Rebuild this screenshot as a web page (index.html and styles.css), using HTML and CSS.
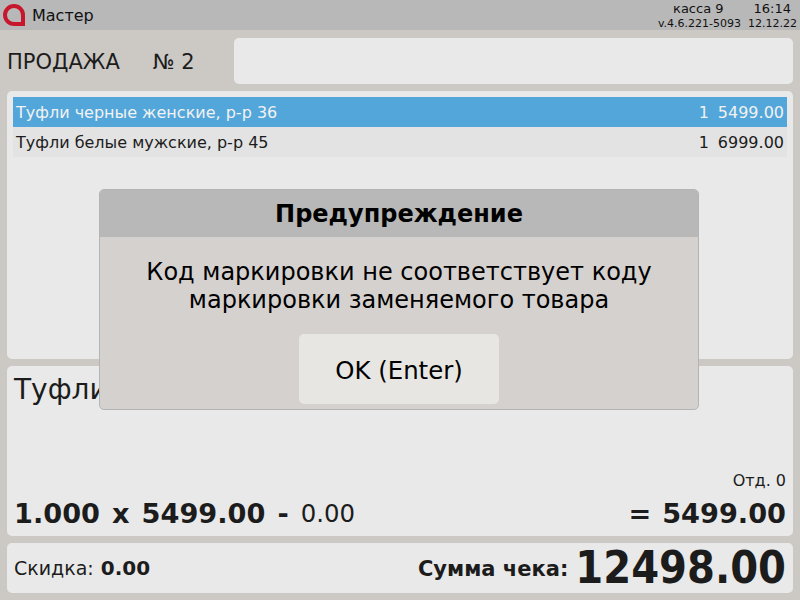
FILE: index.html
```html
<!DOCTYPE html>
<html lang="ru">
<head>
    <meta charset="UTF-8">
    <meta name="viewport" content="width=device-width, initial-scale=1.0">
    <title>Мастер</title>
    <link rel="stylesheet" href="styles.css">
</head>
<body>
    <div class="screen">
        <header class="topbar">
            <svg class="logo" width="22" height="22" viewBox="0 0 22 22">
                <path d="M11 2a9 9 0 1 0 0 18h9v-9a9 9 0 0 0-9-9z" fill="none" stroke="#c8162c" stroke-width="4"/>
            </svg>
            <span class="app-name">Мастер</span>
            <div class="status">
                <div class="status-row status-main"><span>касса 9</span><span class="status-time">16:14</span></div>
                <div class="status-row status-small"><span>v.4.6.221-5093</span><span class="status-date">12.12.22</span></div>
            </div>
        </header>

        <main class="content">
            <div class="sale-row">
                <div class="sale-title"><span>ПРОДАЖА</span><span>№ 2</span></div>
                <div class="sale-box"></div>
            </div>

            <section class="panel list-panel">
                <div class="line selected"><span class="line-name">Туфли черные женские, р-р 36</span><span>1</span><span class="line-price">5499.00</span></div>
                <div class="line"><span class="line-name">Туфли белые мужские, р-р 45</span><span>1</span><span class="line-price">6999.00</span></div>
            </section>

            <section class="panel info-panel">
                <div class="info-name">Туфли черные женские, р-р 36</div>
                <div class="info-dept">Отд. 0</div>
                <div class="calc">
                    <b>1.000</b><b>x</b><b>5499.00</b><b>-</b><span>0.00</span>
                    <b class="calc-eq">=</b><b>5499.00</b>
                </div>
            </section>

            <section class="panel total-panel">
                <span class="discount">Скидка: <b>0.00</b></span>
                <b class="total-label">Сумма чека:</b>
                <b class="total-value">12498.00</b>
            </section>
        </main>

        <div class="dialog">
            <div class="dialog-head">Предупреждение</div>
            <div class="dialog-body">
                <p class="dialog-text">Код маркировки не соответствует коду<br>маркировки заменяемого товара</p>
                <button class="dialog-btn" type="button">OK (Enter)</button>
            </div>
        </div>
    </div>
</body>
</html>
```

FILE: styles.css
```css
* {
    margin: 0;
    padding: 0;
    box-sizing: border-box;
}
body {
    font-family: "DejaVu Sans", sans-serif;
    color: #1c1c1c;
    background: #ccc8c4;
}
.screen {
    position: relative;
    width: 800px;
    height: 600px;
    overflow: hidden;
}
.topbar {
    height: 30px;
    display: flex;
    align-items: center;
    padding: 0 3px;
    background: #b8b8b8;
}
.logo {
    flex: none;
}
.app-name {
    margin-left: 7px;
    font-size: 16px;
    color: #111;
}
.status {
    align-self: flex-start;
    margin-left: auto;
    padding-top: 1px;
    color: #111;
}
.status-row {
    display: flex;
    justify-content: flex-end;
    white-space: nowrap;
}
.status-main {
    font-size: 13px;
    line-height: 16px;
}
.status-small {
    margin-top: 1px;
    font-size: 11px;
    line-height: 12px;
}
.status-time {
    margin-left: 30px;
    margin-right: 6px;
}
.status-date {
    margin-left: 7px;
}
.content {
    display: flex;
    flex-direction: column;
    gap: 7px;
    padding: 8px 7px 0;
}
.sale-row {
    display: flex;
    height: 46px;
}
.sale-title {
    width: 227px;
    display: flex;
    align-items: center;
    gap: 33px;
    padding-top: 2px;
    font-size: 21px;
}
.sale-box {
    flex: 1;
    background: #e9e9e9;
    border-radius: 5px;
}
.panel {
    background: #e9e9e9;
    border-radius: 5px;
}
.list-panel {
    height: 268px;
    padding: 6px;
}
.line {
    height: 30px;
    display: flex;
    align-items: center;
    gap: 9px;
    padding: 1px 3px 0;
    font-size: 16px;
    background: #e3e3e3;
}
.line.selected {
    color: #f2f2f2;
    background: #52a6da;
}
.line-name {
    flex: 1;
}
.info-panel {
    height: 170px;
    padding: 6px 7px 0;
}
.info-name {
    font-size: 28px;
    line-height: 36px;
    white-space: nowrap;
}
.info-dept {
    margin-top: 63px;
    font-size: 16px;
    line-height: 20px;
    text-align: right;
}
.calc {
    display: flex;
    align-items: center;
    gap: 12px;
    margin-top: 8px;
    font-size: 27.2px;
    line-height: 30px;
}
.calc span {
    font-size: 24.4px;
    font-weight: normal;
}
.calc-eq {
    margin-left: auto;
    margin-right: -1px;
}
.total-panel {
    height: 50px;
    display: flex;
    align-items: center;
    padding: 0 7px;
}
.discount {
    font-size: 19px;
}
.discount b {
    margin-left: 1px;
    font-size: 20px;
}
.total-label {
    margin-left: auto;
    padding-top: 2px;
    font-size: 21px;
}
.total-value {
    margin-left: 7px;
    font-size: 44.6px;
    font-stretch: condensed;
}
.dialog {
    position: absolute;
    left: 99px;
    top: 189px;
    width: 600px;
    height: 221px;
    color: #000;
    background: #d5d1ce;
    border: 1px solid #b4b4b4;
    border-radius: 5px;
    overflow: hidden;
}
.dialog-head {
    height: 47px;
    padding-top: 1px;
    font-size: 24px;
    font-weight: bold;
    line-height: 47px;
    text-align: center;
    background: #b8b8b8;
}
.dialog-body {
    display: flex;
    flex-direction: column;
    align-items: center;
    padding-top: 21px;
}
.dialog-text {
    font-size: 24px;
    line-height: 28px;
    text-align: center;
}
.dialog-btn {
    width: 200px;
    height: 70px;
    margin-top: 20px;
    padding-top: 3px;
    font-family: inherit;
    font-size: 24.4px;
    color: #000;
    background: #e7e6e3;
    border: none;
    border-radius: 5px;
}
```
